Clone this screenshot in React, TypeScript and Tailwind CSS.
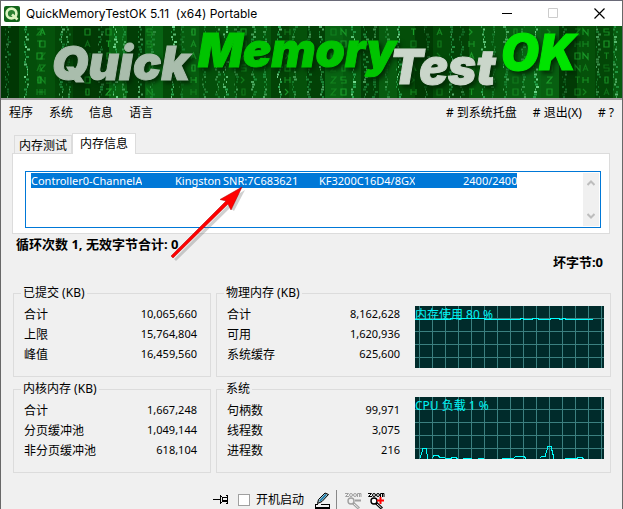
import { useEffect, useRef } from "react";

type Row = [string, string];

const MEMORY_LINE =
  "Controller0-ChannelA\tKingston\tSNR:7C683621\tKF3200C16D4/8GX\t2400/2400";

function makeRandom(seed: number) {
  let s = seed;
  return () => {
    s = (s * 1664525 + 1013904223) % 4294967296;
    return s / 4294967296;
  };
}

const MARKS = [
  "M0 0h5v6h-5z",
  "M0 0h5L0 6h5",
  "M0 0h5M2.500 0v6",
  "M0 6V0l5 6V0",
  "M0 6l2.500-6L5 6M1 4h3",
  "M5 0H0v3h5v3H0",
  "M0 0v6M0 3h5M5 0v6",
  "M0 0l3 3-3 3",
  "M1 0h3v6h-3zM0 3h1",
];

const STREAKS = [4, 23, 58, 65, 97, 112, 121, 137, 149, 170, 178, 201, 214, 222, 233, 250, 262, 276, 291, 305, 318, 350, 362, 371, 384, 395, 423, 448, 458, 480, 490, 502, 520, 532, 561, 595, 612];
const COLUMNS = [36, 39, 84, 105, 146, 190, 240, 284, 330, 340, 410, 436, 468, 512, 546, 574, 582, 603];

function CodeRain() {
  const rnd = makeRandom(41);
  const shades = [];
  for (let x = 0; x < 622; x += 18) {
    shades.push(
      <rect key={x} x={x} y={0} width={18} height={72} fill={rnd() > 0.45 ? "#0d7a1c" : "#002b02"} opacity={rnd() * 0.6} />
    );
  }
  const streaks = STREAKS.map((sx, i) => {
    const strong = i % 4 === 1 ? 0.5 : rnd() * 0.3;
    return Array.from({ length: 29 }, (_, n) => {
      const dx = Math.floor(rnd() * 4);
      const w = 1 + Math.floor(rnd() * 3);
      const light = rnd() > 0.6;
      return (
        <rect key={sx + "-" + n} x={sx + dx} y={n * 2.5} width={w} height={2} fill={light ? "#7fe8a0" : "#2fb45c"} opacity={0.15 + strong + rnd() * 0.25} />
      );
    });
  });
  const marks = COLUMNS.map((x) =>
    Array.from({ length: 6 }, (_, n) => (
      <path key={x + "-" + n} d={MARKS[Math.floor(rnd() * MARKS.length)]} transform={`translate(${x} ${3 + n * 12})`} opacity={0.4 + rnd() * 0.5} />
    ))
  );
  return (
    <g>
      {shades}
      <g className="blur-[0.4px]">{streaks}</g>
      <g fill="none" stroke="#1fa52e" strokeWidth="1.2">{marks}</g>
    </g>
  );
}

function Banner() {
  const words = [
    { text: "Quick", x: 51, y: 54, size: 47, fill: "#a9bdac" },
    { text: "Memory", x: 197, y: 41, size: 47, fill: "#00c400" },
    { text: "Test", x: 389, y: 58, size: 48, fill: "#cad6ca" },
    { text: "OK", x: 500, y: 44, size: 49, fill: "#00e400" },
  ];
  return (
    <svg className="block h-[72px] w-full bg-[#044a08]" viewBox="0 0 621 72" preserveAspectRatio="xMinYMid slice" role="img" aria-label="QuickMemoryTestOK">
      <CodeRain />
      <g className="font-['Inter',sans-serif] font-black italic drop-shadow-[3px_3px_2px_#012a03]">
        {words.map((w) => (
          <text key={w.text} x={w.x} y={w.y} fontSize={w.size} fill={w.fill} stroke={w.fill}>{w.text}</text>
        ))}
      </g>
    </svg>
  );
}

function TitleBar() {
  return (
    <header className="flex h-[26px] items-center border-t border-[#6a6a78] bg-white">
      <svg className="ml-[3px] size-4" viewBox="0 0 16 16">
        <rect width="16" height="16" rx="2" fill="#12641a" />
        <circle cx="7.5" cy="7.5" r="4.9" fill="#2b8030" stroke="#dcf5c0" strokeWidth="2.6" />
        <path d="M8 8.500l5.500 5" stroke="#dcf5c0" strokeWidth="2.6" />
      </svg>
      <h1 className="ml-[6px] flex-1 whitespace-pre font-['Inter','Noto_Sans',sans-serif] text-[12px]">QuickMemoryTestOK 5.11  (x64) Portable</h1>
      <button aria-label="Minimize" className="flex w-[46px] justify-center">
        <svg className="size-[11px]" viewBox="0 0 11 11" stroke="#000"><path d="M0 5.500h10" /></svg>
      </button>
      <button aria-label="Maximize" disabled className="flex w-[46px] justify-center">
        <svg className="size-[11px]" viewBox="0 0 11 11" fill="none" stroke="#ccc"><path d="M.5.5h9v9h-9z" /></svg>
      </button>
      <button aria-label="Close" className="flex w-[46px] justify-center">
        <svg className="size-[11px]" viewBox="0 0 11 11" stroke="#000" strokeWidth="1.2"><path d="M.5.5l10 10M10.500.5l-10 10" /></svg>
      </button>
    </header>
  );
}

function MemoryText() {
  const ref = useRef<HTMLTextAreaElement>(null);
  useEffect(() => {
    ref.current?.focus();
    ref.current?.select();
  }, []);
  return (
    <div className="flex h-[57px] border border-[#0078d7] bg-white p-px">
      <textarea
        ref={ref}
        readOnly
        aria-label="内存信息"
        defaultValue={MEMORY_LINE}
        className="min-w-0 flex-1 resize-none overflow-hidden whitespace-pre pt-px pl-1 text-[11px] leading-[13px] outline-none [tab-size:48px] selection:bg-[#0078d7] selection:text-white"
      />
      <div className="flex w-4 flex-col items-center justify-between bg-[#f0f0f0] py-[6px]">
        <button aria-label="Scroll up">
          <svg className="size-2" viewBox="0 0 8 8" fill="none" stroke="#bdbdbd" strokeWidth="2"><path d="M.5 6L4 2.500l3.500 3.500" /></svg>
        </button>
        <button aria-label="Scroll down">
          <svg className="size-2" viewBox="0 0 8 8" fill="none" stroke="#bdbdbd" strokeWidth="2"><path d="M.5 2L4 5.500l3.500-3.500" /></svg>
        </button>
      </div>
    </div>
  );
}

function Group({ title, rows, chart, wide }: { title: string; rows: Row[]; chart?: React.ReactNode; wide?: boolean }) {
  return (
    <fieldset className={wide ? "flex h-[92px] min-w-0 flex-1 border border-[#dcdcdc] pr-[6px]" : "flex h-[92px] w-[198px] border border-[#dcdcdc] pr-[13px]"}>
      <legend className="ml-[7px] h-4 px-[2px] text-[12px] leading-4">{title}</legend>
      <dl className={wide ? "w-[183px] pt-1 pl-[10px]" : "flex-1 pt-1 pl-[10px]"}>
        {rows.map(([label, value]) => (
          <div key={label} className="flex h-5 items-start justify-between text-[12px] leading-[18px]">
            <dt className="pt-px">{label}</dt>
            <dd className="text-[11px]">{value}</dd>
          </div>
        ))}
      </dl>
      {chart}
    </fieldset>
  );
}

function Chart({ label, line, raised }: { label: string; line: string; raised?: boolean }) {
  const xs = Array.from({ length: 15 }, (_, i) => 4.5 + i * 13);
  const ys = [12.5, 25.5, 38.5, 51.5];
  return (
    <figure className={raised ? "relative ml-auto h-[62px] w-[189px] bg-[#002b2b]" : "relative mt-[5px] ml-auto h-[62px] w-[189px] bg-[#002b2b]"}>
      <svg className="block h-full w-full" viewBox="0 0 189 62" fill="none">
        <g stroke="#3b8080">
          {xs.map((x) => <path key={x} d={`M${x} 0V62`} />)}
          {ys.map((y) => <path key={y} d={`M0 ${y}H189`} />)}
        </g>
        <path d={line} stroke="#00ffff" shapeRendering="crispEdges" />
      </svg>
      <figcaption className="absolute top-0 left-0 text-[12px] leading-[18px] text-[#00f4f4]">{label}</figcaption>
    </figure>
  );
}

function Zoom({ plus }: { plus?: boolean }) {
  const c = plus ? "#000" : "#a0a0a0";
  return (
    <svg className="size-[17px]" viewBox="0 0 17 17" fill="none" stroke={c}>
      <path d="M0 1.500h3.500L.5 4.500H4" />
      <circle cx="6" cy="3" r="1.5" />
      <circle cx="10" cy="3" r="1.5" />
      <path d="M12.500 5V1.500h3.500V5M14.500 1.500V5" />
      <circle cx="6" cy="9" r="3" fill={plus ? "#fff" : "none"} strokeWidth="1.4" />
      <path d="M8 11l6 5.500" strokeWidth="3" />
      <path d="M9 12l4.500 4" stroke="#f0f0f0" />
      <path d={plus ? "M9 8.500h7M12.500 5v7" : "M10 8.500h6"} stroke={plus ? "#f00" : c} strokeWidth="2" />
    </svg>
  );
}

export default function App() {
  const menus = ["程序", "系统", "信息", "语言"];
  const actions = ["# 到系统托盘", "# 退出(X)", "# ?"];
  return (
    <div className="relative min-h-screen border-x border-[#686868] bg-[#f0f0f0] font-['Noto_Sans','Noto_Sans_CJK_SC',sans-serif] text-black">
      <TitleBar />
      <Banner />
      <nav className="flex h-[35px] border-t-2 border-[#a6a0a2] px-2 pt-1 text-[12px] leading-[18px]">
        <div className="flex flex-1 items-start gap-4">
          {menus.map((m) => <button key={m}>{m}</button>)}
        </div>
        <div className="flex items-start gap-4">
          {actions.map((a) => <button key={a}>{a}</button>)}
        </div>
      </nav>
      <main className="px-[11px]">
        <div role="tablist" className="flex h-5 items-end pl-[2px] text-[12px]">
          <button role="tab" aria-selected="false" className="h-[18px] w-[58px] border border-b-0 border-[#dcdcdc] leading-[19px]">内存测试</button>
          <button role="tab" aria-selected="true" className="z-10 -mb-px h-[21px] w-[64px] border border-b-0 border-[#dcdcdc] bg-white leading-[18px]">内存信息</button>
        </div>
        <section className="mr-px h-[81px] border border-[#dcdcdc] bg-white pt-[17px] pr-2 pl-3">
          <MemoryText />
        </section>
        <p className="mt-px ml-1 text-[13px] leading-[18px] font-bold">循环次数 1, 无效字节合计: 0</p>
        <p className="mr-2 text-right text-[13px] leading-[18px] font-bold">坏字节:0</p>
        <div className="mt-[14px] flex flex-col gap-1 pl-px">
          <div className="flex gap-[5px]">
            <Group title="已提交 (KB)" rows={[["合计", "10,065,660"], ["上限", "15,764,804"], ["峰值", "16,459,560"]]} />
            <Group
              wide
              title="物理内存 (KB)"
              rows={[["合计", "8,162,628"], ["可用", "1,620,936"], ["系统缓存", "625,600"]]}
              chart={<Chart label="内存使用 80 %" line="M0 13.500H35V12.500H69V13.500H105V12.500H108V13.500H117V12.500H123V13.500H135V12.500H144V13.500H147V12.500H150V13.500H178" />}
            />
          </div>
          <div className="flex gap-[5px]">
            <Group title="内核内存 (KB)" rows={[["合计", "1,667,248"], ["分页缓冲池", "1,049,144"], ["非分页缓冲池", "618,104"]]} />
            <Group
              wide
              title="系统"
              rows={[["句柄数", "99,971"], ["线程数", "3,075"], ["进程数", "216"]]}
              chart={<Chart raised label="CPU 负载 1 %" line="M5 61L8 51.500h3L13 61.500M17 61L19 58.500h4L25 60.500h4L31 61.500h5V60.500h5V61.500h2M48 61.500h9M63 61.500h6M87 61.500h11L101 59.500h8L111 61.500M125 61L127 59.500h3L133 49.500h3L139 61.500M150 61.500h12V60.500h5V61.500h2" />}
            />
          </div>
        </div>
      </main>
      <footer className="mt-[17px] flex h-5 items-center pl-[212px] text-[12px]">
        <button aria-label="Pin" className="mr-[9px]">
          <svg className="h-3 w-4" viewBox="0 0 16 12" fill="none" stroke="#000" shapeRendering="crispEdges">
            <path d="M0 5.500h7" />
            <path d="M7.500 1v9M8 2.500h1M8 8.500h1M9.500 3v5M9 3.500h5M9 7.500h5M14.500 1v9M13 1.500h2M13 9.500h2" />
            <path d="M10 6.500h4" />
          </svg>
        </button>
        <label className="flex items-center gap-[6px]">
          <input type="checkbox" className="size-3 appearance-none border border-[#a0a0a0] bg-white" />
          开机启动
        </label>
        <button aria-label="Edit" className="ml-[10px]">
          <svg className="size-[17px]" viewBox="0 0 17 17" fill="none">
            <path d="M3.500 11.500l1-4L11 1l3.500 1.500-6.500 7z" fill="#9fc3d0" stroke="#000" />
            <path d="M6 9l6-6.500" stroke="#1678a8" strokeWidth="1.5" />
            <path d="M4 12.500H1.500v3.500h14v-3.500H7" stroke="#000" strokeWidth="1.5" shapeRendering="crispEdges" />
          </svg>
        </button>
        <span className="ml-[5px] h-5 w-px bg-[#888]" />
        <button aria-label="Zoom out" className="ml-2"><Zoom /></button>
        <button aria-label="Zoom in" className="ml-[6px]"><Zoom plus /></button>
      </footer>
      <svg className="pointer-events-none absolute top-[185px] left-[168px] h-[76px] w-[80px]" viewBox="0 0 80 76">
        <path d="M5 74L60 19 56 17 76 5 65 26 61 23 7 76z" fill="#777" opacity="0.35" />
        <path d="M2 71L57 16 51 14.500 73 2 62 25 59 19 4 73z" fill="#f00" stroke="#a00" strokeWidth="0.5" />
      </svg>
    </div>
  );
}
